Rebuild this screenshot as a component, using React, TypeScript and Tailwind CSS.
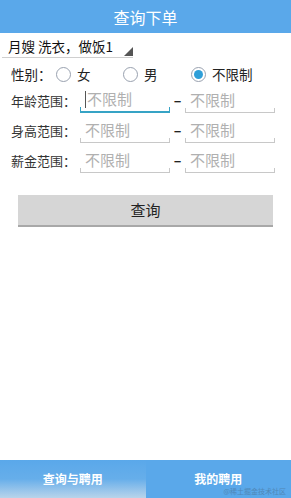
import { useState } from 'react';

const font = { fontFamily: '"Noto Sans CJK SC", "Noto Sans", sans-serif' };

function Radio({ checked }: { checked?: boolean }) {
  return (
    <span className="w-[15px] h-[15px] shrink-0 rounded-full border border-gray-400 flex items-center justify-center bg-white">
      {checked && <span className="w-[9px] h-[9px] rounded-full bg-[#2f9fd8]" />}
    </span>
  );
}

function Field({ active }: { active?: boolean }) {
  return (
    <div
      className={`w-[90px] h-[24px] shrink-0 flex items-center pl-[5px] text-[15px] text-[#b0b0b0] whitespace-nowrap border-b ${
        active ? 'border-[#36a3c5] border-b-2' : 'border-[#c8c8c8]'
      } relative`}
    >
      {active && <span className="w-px h-[17px] bg-[#555] mr-px" />}
      不限制
      <span className={`absolute left-0 bottom-0 w-px h-[4px] ${active ? 'bg-[#36a3c5]' : 'bg-[#c8c8c8]'}`} />
      <span className={`absolute right-0 bottom-0 w-px h-[4px] ${active ? 'bg-[#36a3c5]' : 'bg-[#c8c8c8]'}`} />
    </div>
  );
}

export default function App() {
  const [sex] = useState(2);
  const rows = ['年龄范围：', '身高范围：', '薪金范围：'];

  return (
    <div className="w-[291px] h-[498px] bg-white flex flex-col" style={font}>
      <div className="h-[33px] bg-[#5aa8ea] flex items-center justify-center text-white text-[16px]">
        查询下单
      </div>

      <div className="mt-[3px] ml-[2px] w-[131px] h-[22px] border-b border-[#cfcfcf] relative flex items-center pl-[6px] text-[13.5px] text-[#111] whitespace-nowrap">
        月嫂 洗衣，做饭1
        <svg className="absolute right-0 bottom-[1px]" width="9" height="9" viewBox="0 0 9 9">
          <polygon points="9,0 9,9 0,9" fill="#555" />
        </svg>
      </div>

      <div className="mt-[6px] ml-[11px] h-[20px] flex items-center text-[13.5px] text-[#222] whitespace-nowrap">
        <span className="w-[45px]">性别：</span>
        <div className="flex items-center gap-[6px] w-[67px]">
          <Radio checked={sex === 0} />
          <span>女</span>
        </div>
        <div className="flex items-center gap-[6px] w-[68px]">
          <Radio checked={sex === 1} />
          <span>男</span>
        </div>
        <div className="flex items-center gap-[6px]">
          <Radio checked={sex === 2} />
          <span>不限制</span>
        </div>
      </div>

      <div className="mt-[4px] flex flex-col gap-[5px]">
        {rows.map((label, i) => (
          <div key={label} className="ml-[11px] h-[25px] flex items-center text-[13px] text-[#333] whitespace-nowrap">
            <span className="w-[69px] shrink-0">{label}</span>
            <Field active={i === 0} />
            <span className="w-[15px] shrink-0 text-center text-[#222] text-[14px] font-bold">–</span>
            <Field />
          </div>
        ))}
      </div>

      <button className="mt-[22px] mx-[18px] h-[32px] bg-[#d6d6d6] border-b-2 border-[#a8a8a8] text-[15px] text-[#222] flex items-center justify-center">
        查询
      </button>

      <div className="flex-1" />

      <div className="h-[38px] flex text-white text-[12px] font-bold">
        <div className="w-1/2 bg-gradient-to-b from-[#5aa8ea] via-[#66aeea] to-[#b8d4ea] flex items-center justify-center">
          查询与聘用
        </div>
        <div className="w-1/2 bg-[#5aa8ea] flex items-center justify-center relative">
          我的聘用
          <span className="absolute right-[5px] bottom-[2px] text-[7px] font-normal text-[#4d7ba3] opacity-70 whitespace-nowrap">
            @稀土掘金技术社区
          </span>
        </div>
      </div>
    </div>
  );
}
